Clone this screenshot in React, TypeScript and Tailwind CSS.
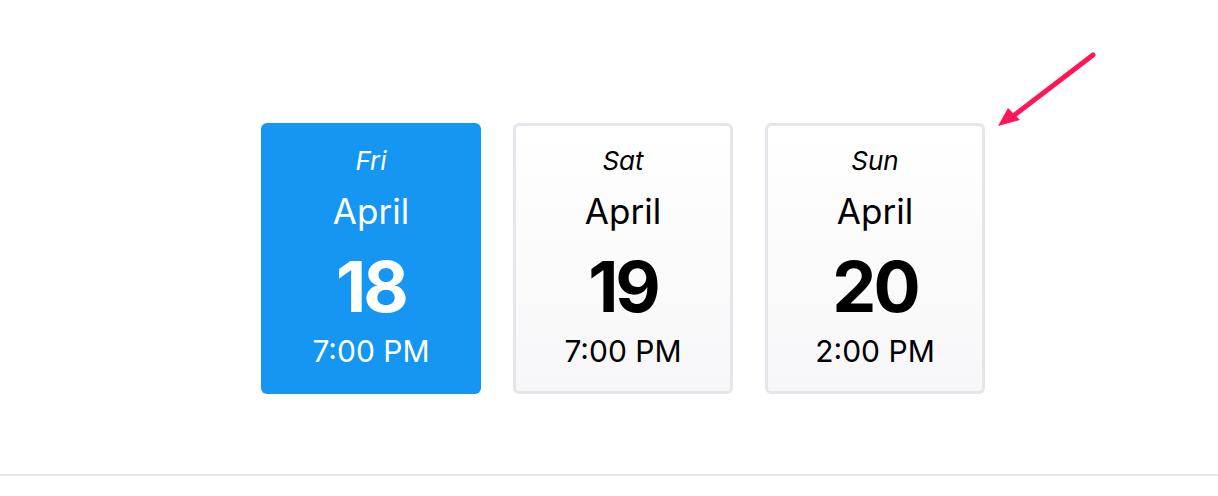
const dates = [
    {day: "Fri", month: "April", date: "18", time: "7:00 PM", active: true},
    {day: "Sat", month: "April", date: "19", time: "7:00 PM", active: false},
    {day: "Sun", month: "April", date: "20", time: "2:00 PM", active: false},
];

function DateCard({day, month, date, time, active}: {day: string, month: string, date: string, time: string, active: boolean}) {
    return (
        <div
            className={
                active
                    ? "w-[220px] h-[271px] rounded-[6px] bg-[#1496f2] text-white flex flex-col items-center"
                    : "w-[220px] h-[271px] rounded-[6px] border-[3px] border-[#e5e5ec] bg-gradient-to-b from-white to-[#f7f7f9] text-black flex flex-col items-center"
            }
        >
            <div className={active ? "flex flex-col items-center pt-[22px]" : "flex flex-col items-center pt-[19px]"}>
                <p className="italic text-[26px] leading-[32px]">{day}</p>
                <p className="text-[35px] leading-[42px] mt-[13px]">{month}</p>
                <p className="font-bold text-[70px] leading-[72px] mt-[19px] tracking-[-3px]">{date}</p>
                <p className="text-[30px] leading-[36px] mt-[10px]">{time}</p>
            </div>
        </div>
    )
}

export default function App() {
    return (
        <div className="w-[1218px] h-[496px] bg-white relative font-['Inter',sans-serif]">
            <div className="flex gap-[32px] pl-[261px] pt-[123px]">
                {dates.map((d) => (
                    <DateCard key={d.date} {...d}/>
                ))}
            </div>

            {/* pointer arrow */}
            <svg className="absolute left-[990px] top-[45px]" width="115" height="90" viewBox="0 0 115 90" fill="none">
                <line x1="103" y1="10" x2="22" y2="72" stroke="#ff1558" strokeWidth="5" strokeLinecap="round"/>
                <polygon points="8,81 18,63 30,75" fill="#ff1558"/>
            </svg>

            <div className="absolute left-0 right-0 top-[474px] h-[2px] bg-[#e4e4ea]"/>
        </div>
    )
}
